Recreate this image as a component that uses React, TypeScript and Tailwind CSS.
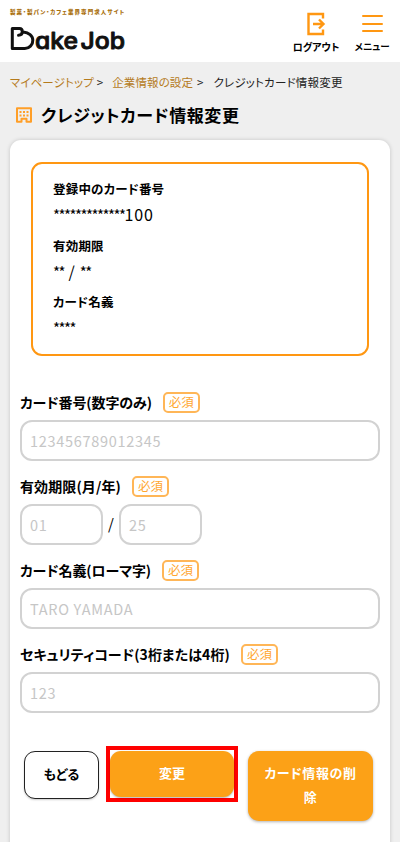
import React from 'react';

const logoText = "font-[Inter,sans-serif] text-[23px] font-medium [font-feature-settings:'cv11']";

const Logo = () => (
  <svg width="124" height="40" viewBox="0 -6 124 40" role="img" aria-label="Bake Job">
    <path
      d="M8.5 9.200C11 9.200 12.300 7.500 12.300 5.500C12.300 3.500 11 2.500 9.500 2.500H2.300V22.500H14.500a8 8 0 0 0 8.300-8.300c0-4.500-4-7.800-9.500-8.300"
      fill="none"
      stroke="#111"
      strokeWidth="3"
      strokeLinecap="round"
      strokeLinejoin="round"
    />
    <text
      x="25"
      y="23.300"
      textLength="43"
      lengthAdjust="spacingAndGlyphs"
      fill="#111"
      stroke="#111"
      strokeWidth=".9"
      strokeLinejoin="round"
      className={logoText}
    >
      ake
    </text>
    <text
      x="70.500"
      y="23.300"
      textLength="44.500"
      lengthAdjust="spacingAndGlyphs"
      fill="#111"
      stroke="#111"
      strokeWidth=".9"
      strokeLinejoin="round"
      className={logoText}
    >
      Job
    </text>
  </svg>
);

const LogoutIcon = () => (
  <svg width="20" height="24" viewBox="0 0 20 24" fill="none" stroke="#ff9712" strokeWidth="2.4">
    <path d="M17 6.500V2H2.500v20H17v-4.500" />
    <path d="M7 12h10.500M13 7.500 17.500 12l-4.500 4.500" />
  </svg>
);

const BuildingIcon = () => (
  <svg width="18" height="16" viewBox="0 0 18 16" fill="none" stroke="#ff9f28">
    <path d="M2 14.800V1.200h14v13.600h-4.500v-3h-5v3z" strokeWidth="2" strokeLinejoin="round" />
    <path d="M4.500 5h2M8 5h2M11.500 5h2M4.500 8.500h2M8 8.500h2M11.500 8.500h2" strokeWidth="2" />
  </svg>
);

const Header = () => (
  <header className="flex h-[62px] justify-between bg-white pl-[10px]">
    <div className="pt-[7px]">
      <p className="h-[10px] w-[124px] whitespace-nowrap text-[5.5px] font-black leading-[10px] tracking-[1.05px] text-[#a96f0c]">
        製菓・製パン・カフェ業界専門求人サイト
      </p>
      <div className="mt-[3px]">
        <Logo />
      </div>
    </div>
    <nav className="flex pr-[10px] text-[10px] font-bold leading-4 text-black">
      <a className="flex w-[48px] flex-col items-center pt-[12px]">
        <LogoutIcon />
        <span className="mt-[3px] whitespace-nowrap">ログアウト</span>
      </a>
      <a className="ml-[14px] flex w-[36px] flex-col items-center pt-[15px]">
        <span className="flex h-[17px] w-[21px] flex-col justify-between">
          <span className="h-[2px] rounded bg-[#ff9712]" />
          <span className="h-[2px] rounded bg-[#ff9712]" />
          <span className="h-[2px] rounded bg-[#ff9712]" />
        </span>
        <span className="mt-[6px] whitespace-nowrap text-[9.500px]">メニュー</span>
      </a>
    </nav>
  </header>
);

const cardInfo = [
  { label: '登録中のカード番号', value: '*************100' },
  { label: '有効期限', value: '** / **' },
  { label: 'カード名義', value: '****' },
];

// masked digits are set tighter than the visible ones
const MaskedValue = ({ value }: { value: string }) =>
  value.split(/(\*+)/).map((part, i) => (
    <span
      key={i}
      className={
        part.startsWith('*')
          ? 'text-[15px] font-normal tracking-[-1.500px]'
          : 'text-[16px] tracking-[0.800px]'
      }
    >
      {part}
    </span>
  ));

const CardInfo = () => (
  <dl className="mx-[21px] mt-[22px] h-[194px] rounded-[11px] border-2 border-[#ff9712] pl-[20px] pt-[14px]">
    {cardInfo.map(({ label, value }) => (
      <div key={label} className="h-[56.500px]">
        <dt className="text-[12.500px] font-bold leading-[22px] tracking-[0.2px]">{label}</dt>
        <dd className="mt-[2px] whitespace-pre text-[15px] leading-6">
          <MaskedValue value={value} />
        </dd>
      </div>
    ))}
  </dl>
);

const FieldLabel = ({ children }: { children: React.ReactNode }) => (
  <div className="flex h-[22px] items-center gap-[11px] whitespace-nowrap">
    <span className="pb-px text-[14px] font-bold leading-[22px]">{children}</span>
    <span className="flex h-[21px] w-[37px] items-center justify-center rounded-[5px] border-2 border-[#ffb657] text-[12.500px] text-[#ffa62f]">
      必須
    </span>
  </div>
);

const inputClass =
  'block h-[41px] rounded-[12px] border-2 border-[#d2d2d2] bg-white px-[8px] text-[14.500px] tracking-[0.700px] outline-none placeholder:text-[#c6c6c6]';

const App = () => {
  return (
    <div className="h-[842px] overflow-hidden bg-[#efefef] font-['Noto_Sans_CJK_JP',sans-serif] text-black [font-feature-settings:'palt']">
      <Header />

      <div className="flex h-[42px] items-center whitespace-nowrap pl-[10px] text-[11.500px] tracking-[0.1px] text-[#222]">
        <a className="text-[#b57b1c]">マイページトップ</a>
        <span className="ml-[3px]">&gt;</span>
        <a className="ml-[9px] text-[#b57b1c]">企業情報の設定</a>
        <span className="ml-[4px]">&gt;</span>
        <span className="ml-[10px] tracking-[0.2px]">クレジットカード情報変更</span>
      </div>

      <h1 className="flex h-[22px] items-center whitespace-nowrap pl-[15px] text-[17px] font-bold tracking-[0.600px]">
        <BuildingIcon />
        <span className="ml-[8px] pb-px">クレジットカード情報変更</span>
      </h1>

      <main className="mx-[10px] mt-[14px] flow-root h-[740px] rounded-[11px] bg-white shadow-[0_0_4px_rgba(0,0,0,0.18)]">
        <CardInfo />

        <form className="px-[10px] pt-[35px]">
          <FieldLabel>
            <span className="tracking-[-0.100px]">カード番号(数字のみ)</span>
          </FieldLabel>
          <input className={`${inputClass} mt-[7px] w-full`} placeholder="123456789012345" />

          <div className="mt-[14px]">
            <FieldLabel>
              <span className="tracking-[0.100px]">有効期限(月/年)</span>
            </FieldLabel>
            <div className="mt-[7px] flex items-center">
              <input className={`${inputClass} w-[83px]`} placeholder="01" />
              <span className="w-[16px] text-center text-[15px]">/</span>
              <input className={`${inputClass} w-[83px]`} placeholder="25" />
            </div>
          </div>

          <div className="mt-[14px]">
            <FieldLabel>
              <span className="tracking-[-0.100px]">カード名義(ローマ字)</span>
            </FieldLabel>
            <input className={`${inputClass} mt-[7px] w-full`} placeholder="TARO YAMADA" />
          </div>

          <div className="mt-[14px]">
            <FieldLabel>
              <span className="tracking-[0.100px]">セキュリティコード(3桁または4桁)</span>
            </FieldLabel>
            <input className={`${inputClass} mt-[7px] w-full`} placeholder="123" />
          </div>
        </form>

        <div className="mt-[33px] flex items-start pl-[14px] text-[13px] font-bold">
          <button className="mt-[5px] h-[48px] w-[75px] rounded-[11px] border-[1.5px] border-[#222] bg-white pb-[2px] shadow-[0_1px_2px_rgba(0,0,0,0.2)]">
            もどる
          </button>
          <div className="ml-[7px] h-[56px] w-[132px] border-4 border-[#fe0000] pt-px">
            <button className="block h-[46px] w-full rounded-[11px] bg-[#fca117] pb-[2px] text-white shadow-[0_1px_2px_rgba(0,0,0,0.3)]">
              変更
            </button>
          </div>
          <button className="ml-[10px] mt-[5px] h-[70px] w-[125px] rounded-[11px] bg-[#fca117] px-[15px] pb-[2px] leading-[24px] tracking-[0.600px] text-white shadow-[0_1px_3px_rgba(0,0,0,0.3)]">
            カード情報の削除
          </button>
        </div>
      </main>
    </div>
  );
};

export default App;
